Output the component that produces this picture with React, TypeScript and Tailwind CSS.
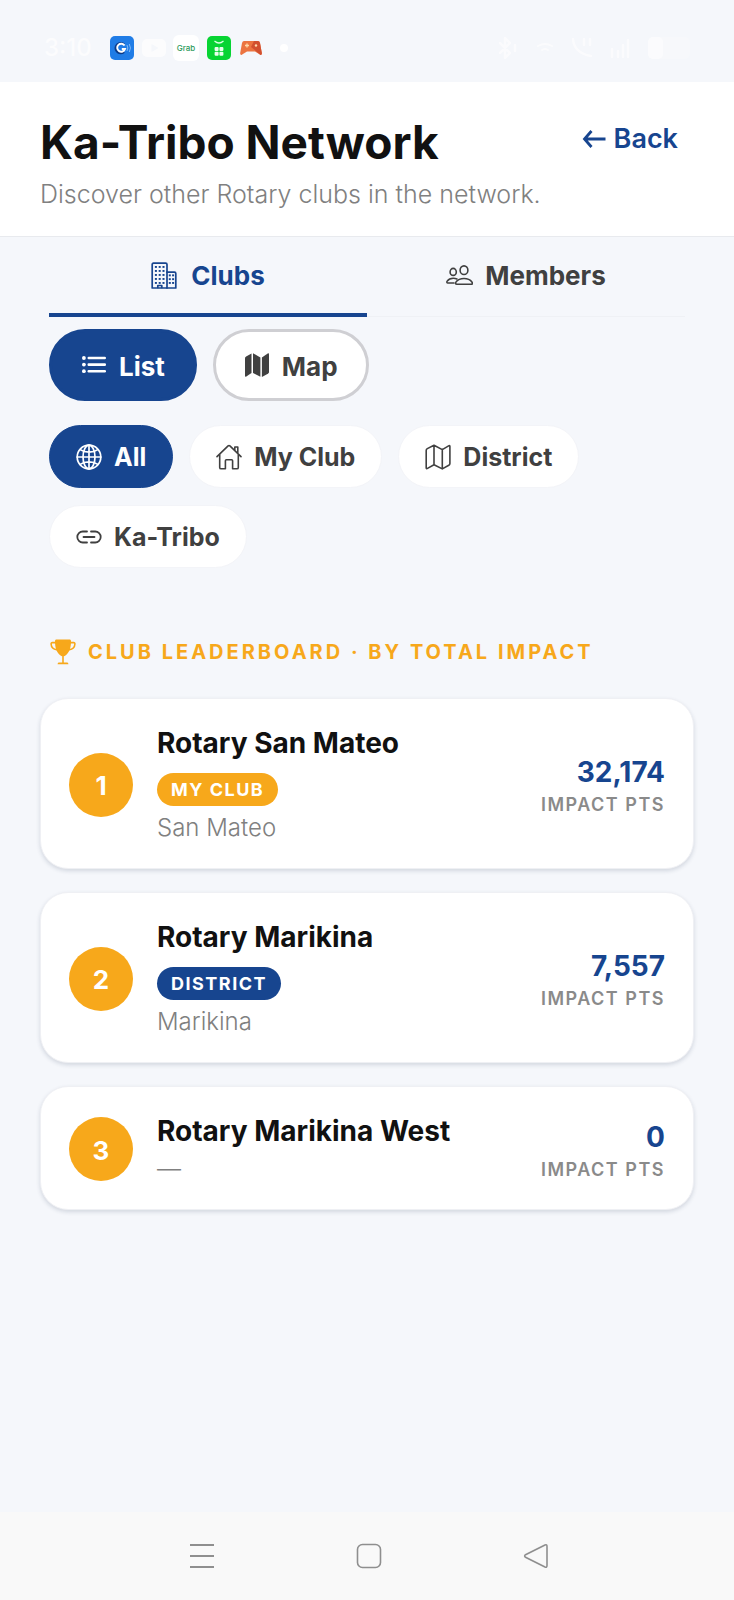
import React from 'react';

type IconProps = { className?: string };

const stroke = {
  fill: 'none',
  stroke: 'currentColor',
  strokeLinecap: 'round' as const,
  strokeLinejoin: 'round' as const,
};

function BuildingsIcon({ className = 'h-[27px] w-[26px]' }: IconProps) {
  const tall: [number, number][] = [];
  for (let row = 0; row < 5; row++) for (let col = 0; col < 3; col++) tall.push([3.9 + col * 3.8, 4 + row * 4]);
  const low: [number, number][] = [];
  for (let row = 0; row < 3; row++) for (let col = 0; col < 2; col++) low.push([17.8 + col * 3.3, 12.4 + row * 3.8]);
  return (
    <svg viewBox="0 0 26 27" className={className} aria-hidden="true">
      <g {...stroke} strokeWidth="1.7">
        <path d="M2.4 1.2h12.2q1.4 0 1.4 1.4V26H1.200V2.400q0-1.200 1.200-1.200z" />
        <path d="M16 10.200h7.400q1.400 0 1.400 1.400V26H16" />
        <path d="M6.800 25.500v-2h4v2" />
      </g>
      {[...tall, ...low].map(([x, y]) => (
        <rect key={`${x}-${y}`} x={x} y={y} width="2" height="1.900" fill="currentColor" />
      ))}
    </svg>
  );
}

function PeopleIcon() {
  return (
    <svg viewBox="0 0 27 21" className="h-[21px] w-[27px]" aria-hidden="true">
      <g {...stroke} strokeWidth="1.6">
        <ellipse cx="7.200" cy="6.900" rx="3.100" ry="3.500" />
        <ellipse cx="18" cy="5.200" rx="3.900" ry="4.300" />
        <path d="M10.900 19.200c-1.600 0-1.600-1.200-.8-2.300 1.500-2 4.300-3.400 7.900-3.400s6.400 1.400 7.900 3.400c.8 1.100.8 2.300-.8 2.300z" />
        <path d="M8 18H1.900c-1.200 0-1.300-1-.7-1.900 1.200-1.700 3.200-2.900 6-2.900 1.500 0 2.700.300 3.700.8" />
      </g>
    </svg>
  );
}

function ListIcon() {
  return (
    <svg viewBox="0 0 26 20" className="h-5 w-[26px]" aria-hidden="true" fill="currentColor">
      {[3, 9.6, 16.2].map((y) => (
        <g key={y}>
          <circle cx="2.900" cy={y} r="1.900" />
          <rect x="6.500" y={y - 1.3} width="18.500" height="2.600" rx="1.200" />
        </g>
      ))}
    </svg>
  );
}

function MapFillIcon() {
  return (
    <svg viewBox="0 0 26 26" className="size-[26px]" aria-hidden="true" fill="currentColor">
      <path d="M7.500 1.400v19.600l-5.200 3.500C1.500 25 1 24.700 1 23.800V6.400c0-1 .4-1.500 1.100-2z" />
      <path d="M9 1.300l7.400 4.200v19.200L9 20.900z" />
      <path d="M17.900 5.500l5.800-4c.8-.5 1.300-.2 1.300.7v17.600c0 1-.4 1.500-1.100 2l-6 3.200z" />
    </svg>
  );
}

function MapIcon() {
  return (
    <svg viewBox="0 0 26 26" className="size-[26px]" aria-hidden="true">
      <path
        {...stroke}
        strokeWidth="1.600"
        d="M1.200 6.400c0-1 .4-1.400 1.100-1.800L9 1.300l8.300 4.300 6.300-3.700c.9-.5 1.300-.2 1.300.7v16.800c0 1-.4 1.400-1.100 1.800l-6.500 3.700L9 20.700l-6.500 3.700c-.8.5-1.300.2-1.300-.7zM9 1.300v19.400M17.300 5.600v19.300"
      />
    </svg>
  );
}

function GlobeIcon() {
  return (
    <svg viewBox="0 0 26 26" className="size-[26px]" aria-hidden="true">
      <g {...stroke} strokeWidth="1.700">
        <circle cx="13" cy="13" r="11.800" />
        <ellipse cx="13" cy="13" rx="6" ry="11.800" />
        <path d="M13 1.200v23.600M1.200 13h23.600M4.200 5.600c2.200 1.600 5.300 2.500 8.800 2.500s6.600-.9 8.800-2.500M4.200 20.400c2.200-1.600 5.300-2.500 8.800-2.500s6.600.9 8.800 2.500" />
      </g>
    </svg>
  );
}

function HouseIcon() {
  return (
    <svg viewBox="0 0 26 26" className="size-[26px]" aria-hidden="true">
      <path
        {...stroke}
        strokeWidth="1.600"
        d="M1 12.600L12.100 1.900q.9-.8 1.800 0L25 12.600M18.800 6.300V3h3v6.300M3.700 10.400v13q0 1.400 1.400 1.400h4.300v-8q0-1 1-1h5.200q1 0 1 1v8h4.300q1.400 0 1.400-1.400v-13"
      />
    </svg>
  );
}

function LinkIcon() {
  return (
    <svg viewBox="0 0 26 26" className="size-[26px]" aria-hidden="true">
      <path
        {...stroke}
        strokeWidth="1.800"
        d="M11 18.500H6.800a5.500 5.500 0 0 1 0-11H11M15 7.500h4.200a5.500 5.500 0 0 1 0 11H15M7.500 13h11"
      />
    </svg>
  );
}

function TrophyIcon() {
  return (
    <svg viewBox="0 0 26 26" className="size-[26px]" aria-hidden="true">
      <path
        fill="currentColor"
        d="M6.600.6h12.800c1.100 0 1.600.6 1.600 1.500 0 6.200-1.300 11.200-5.200 14.100-.8.6-1.600.9-2 1v6.400h3c1 0 1.600.6 1.600 1.600H7.600c0-1 .6-1.600 1.600-1.600h3v-6.400c-.4-.1-1.200-.4-2-1C6.300 13.300 5 8.300 5 2.100 5 1.200 5.500.6 6.600.6z"
      />
      <path
        {...stroke}
        strokeWidth="1.600"
        d="M5.700 3.600H2.300Q1 3.600 1.100 5c.2 3.200 2.400 5.400 5.700 5.800M20.300 3.600h3.400q1.300 0 1.200 1.400c-.2 3.200-2.400 5.400-5.700 5.800"
      />
    </svg>
  );
}

function ArrowLeftIcon() {
  return (
    <svg viewBox="0 0 24 24" className="size-6" aria-hidden="true">
      <path
        fill="none"
        stroke="currentColor"
        strokeWidth="2.800"
        strokeLinejoin="miter"
        d="M23.500 12H2.500M9.500 4L2.500 12l7 8"
      />
    </svg>
  );
}

function StatusBar() {
  return (
    <div className="flex h-[82px] items-center justify-between bg-[#f5f7fb] pt-3.5 pr-11 pl-11 text-white">
      <div className="flex items-center gap-[7px]">
        <span className="w-[58px] text-2xl font-medium opacity-70">3:10</span>
        <svg viewBox="0 0 26 26" className="size-[26px]" aria-hidden="true">
          <rect x="1" y="1" width="24" height="24" rx="5" fill="#1f7ce6" />
          <path d="M15.200 9.600a5 5 0 1 0-.2 7.300" fill="none" stroke="#0b3a86" strokeWidth="2.400" />
          <path d="M15.600 10.600a4 4 0 1 0 .4 3.400h-3.200" fill="none" stroke="#fff" strokeWidth="1.900" />
          <path d="M18 10q1.600 3 0 6M20.300 9q2.300 4 0 8" fill="none" stroke="#7fb9f7" strokeWidth="1" />
        </svg>
        <svg viewBox="0 0 24 18" className="h-[18px] w-6 opacity-70" aria-hidden="true">
          <rect width="24" height="18" rx="5" fill="#fff" />
          <path d="M9.500 5v8l7-4z" fill="#f5f7fb" />
        </svg>
        <span className="flex size-[26px] items-center justify-center rounded-md bg-white text-[8px] font-medium text-[#2b9a5b]">
          Grab
        </span>
        <svg viewBox="0 0 26 26" className="size-[26px]" aria-hidden="true">
          <rect x="1" y="1" width="24" height="24" rx="5" fill="#07d433" />
          <path d="M8.500 6q4.500 4 9 0" fill="none" stroke="#d9ffe0" strokeWidth="1.200" />
          <g fill="#e9ffed">
            <rect x="8.600" y="12" width="4" height="4" rx="1" />
            <rect x="13.400" y="12" width="4" height="4" rx="1" />
            <rect x="8.600" y="16.800" width="4" height="4" rx="1" />
            <rect x="13.400" y="16.800" width="4" height="4" rx="1" />
          </g>
        </svg>
        <svg viewBox="0 0 24 18" className="h-[18px] w-6" aria-hidden="true">
          <path
            d="M5 2h14q1.500 0 2 2l1.800 10q.2 2-1.200 1.900L16 12.500H8L2.400 15.900Q1 16 1.200 14L3 4q.5-2 2-2z"
            fill="#ec7440"
          />
          <path d="M15 2h4q1.500 0 2 2l1.800 10q.2 2-1.200 1.900L12 8z" fill="#d2502f" />
          <path d="M6 6.500h4M8 4.500v4" stroke="#ffd9a8" strokeWidth="1.300" />
          <circle cx="17" cy="6.500" r="1.200" fill="#ffd9a8" />
        </svg>
        <span className="ml-2.5 size-2 rounded-full bg-white" />
      </div>
      <div className="flex items-center gap-4 opacity-60">
        <svg viewBox="0 0 24 24" className="size-6" aria-hidden="true">
          <path {...stroke} strokeWidth="2.500" d="M4 7l10 10-5 5V2l5 5L4 17M19 9v6" />
        </svg>
        <svg viewBox="0 0 18 12" className="h-3 w-[18px]" aria-hidden="true">
          <path {...stroke} strokeWidth="2" d="M2 4q7-4 14 0M6 8q3-2 6 0" />
        </svg>
        <svg viewBox="0 0 24 24" className="size-6" aria-hidden="true">
          <path {...stroke} strokeWidth="2.500" d="M3 3q1 14 18 17M14 3v6M20 3v6" />
        </svg>
        <svg viewBox="0 0 22 22" className="size-[22px]" aria-hidden="true">
          <path {...stroke} strokeWidth="2.500" d="M2 20v-8M8 20v-6M13 20V8M18 20V3" />
        </svg>
        <svg viewBox="0 0 42 22" className="h-[22px] w-[42px]" aria-hidden="true">
          <rect width="42" height="22" rx="5" fill="#f9fafc" />
          <rect width="15" height="22" rx="5" fill="#fff" />
        </svg>
      </div>
    </div>
  );
}

type ChipProps = { icon: React.ReactNode; label: string; active?: boolean };

function FilterChip({ icon, label, active }: ChipProps) {
  return (
    <button
      type="button"
      aria-pressed={!!active}
      className={
        active
          ? 'flex h-[63px] items-center gap-3 rounded-full border border-[#17458f] bg-[#17458f] px-[26px] text-[25px] font-bold text-white'
          : 'flex h-[63px] items-center gap-3 rounded-full border border-[#f3f4f8] bg-white px-[26px] text-[25px] font-bold text-[#404040]'
      }
    >
      {icon}
      <span className="pt-0.5">{label}</span>
    </button>
  );
}

type Club = { rank: number; name: string; place: string; points: string; tag?: 'My Club' | 'District' };

const clubs: Club[] = [
  { rank: 1, name: 'Rotary San Mateo', place: 'San Mateo', points: '32,174', tag: 'My Club' },
  { rank: 2, name: 'Rotary Marikina', place: 'Marikina', points: '7,557', tag: 'District' },
  { rank: 3, name: 'Rotary Marikina West', place: '—', points: '0' },
];

function ClubCard({ club }: { club: Club }) {
  return (
    <li className="flex items-center gap-6 rounded-[28px] border border-[#eff0f4] bg-white px-7 pt-6 pb-[22px] shadow-[0_2px_4px_rgba(30,50,80,0.16)]">
      <span className="flex size-16 shrink-0 items-center justify-center rounded-full bg-[#f7a81b] pt-0.5 text-[26px] font-bold text-white">
        {club.rank}
      </span>
      <div className="flex min-w-0 flex-1 flex-col items-start">
        <h3 className="text-[28px] leading-10 font-bold text-[#111111]">{club.name}</h3>
        {club.tag && (
          <span
            className={
              club.tag === 'My Club'
                ? 'mt-2.5 mb-1 flex h-[33px] items-center rounded-full bg-[#f7a81b] px-3.5 text-lg font-bold tracking-[1.5px] text-white uppercase'
                : 'mt-2.5 mb-1 flex h-[33px] items-center rounded-full bg-[#17458f] px-3.5 text-lg font-bold tracking-[1.5px] text-white uppercase'
            }
          >
            {club.tag}
          </span>
        )}
        <p className="text-2xl leading-9 font-light text-[#808080]">{club.place}</p>
      </div>
      <div className="flex flex-col items-end pt-1">
        <span className="text-[28px] leading-9 font-bold text-[#17458f]">{club.points}</span>
        <span className="text-lg leading-[29px] font-semibold tracking-[1.5px] text-[#8a8a8a] uppercase">Impact pts</span>
      </div>
    </li>
  );
}

export default function App() {
  return (
    <div className="flex min-h-screen flex-col bg-[#f5f7fb] font-['Inter','Liberation_Sans',sans-serif]">
      <StatusBar />
      <header className="flex items-start justify-between border-b border-[#e8eaee] bg-white pt-7 pr-14 pb-6 pl-10">
        <div>
          <h1 className="pt-0.5 text-[46px] leading-[60px] font-bold text-[#111111]">Ka-Tribo Network</h1>
          <p className="mt-1 text-[25px] leading-9 font-light text-[#808080]">
            Discover other Rotary clubs in the network.
          </p>
        </div>
        <a href="#back" className="mt-[9px] flex items-center gap-2 text-[27px] leading-10 font-semibold text-[#17458f]">
          <ArrowLeftIcon />
          Back
        </a>
      </header>

      <main className="flex-1 px-10">
        <div className="px-[9px]">
          <nav className="grid grid-cols-2">
            <a
              href="#clubs"
              aria-current="page"
              className="flex h-20 items-center justify-center gap-3.5 border-b-4 border-[#17458f] text-[26px] font-bold text-[#17458f]"
            >
              <BuildingsIcon />
              Clubs
            </a>
            <a
              href="#members"
              className="flex h-20 items-center justify-center gap-3 border-b border-[#eff1f5] pb-0.5 text-[26px] font-bold text-[#404040]"
            >
              <PeopleIcon />
              Members
            </a>
          </nav>

          <div className="mt-3 flex gap-4">
            <button
              type="button"
              aria-pressed="true"
              className="flex h-[72px] items-center gap-3 rounded-full border-3 border-[#17458f] bg-[#17458f] px-[29px] text-[26px] font-bold text-white"
            >
              <ListIcon />
              <span className="pt-0.5">List</span>
            </button>
            <button
              type="button"
              aria-pressed="false"
              className="flex h-[72px] items-center gap-3 rounded-full border-3 border-[#cfcfd3] bg-white px-7 text-[26px] font-bold text-[#404040]"
            >
              <MapFillIcon />
              <span className="pt-0.5">Map</span>
            </button>
          </div>

          <div className="mt-6 flex flex-wrap gap-x-4 gap-y-[17px]">
            <FilterChip icon={<GlobeIcon />} label="All" active />
            <FilterChip icon={<HouseIcon />} label="My Club" />
            <FilterChip icon={<MapIcon />} label="District" />
            <FilterChip icon={<LinkIcon />} label="Ka-Tribo" />
          </div>
        </div>

        <h2 className="mt-[68px] flex items-center gap-3 px-2.5 text-xl leading-8 font-bold tracking-[3px] text-[#f7a81b] uppercase">
          <TrophyIcon />
          Club leaderboard · by total impact
        </h2>
        <ol className="mt-[30px] flex flex-col gap-[23px]">
          {clubs.map((club) => (
            <ClubCard key={club.rank} club={club} />
          ))}
        </ol>
      </main>

      <nav className="flex h-[88px] items-center justify-center gap-[141px] bg-[#f9f9f9] pl-1 text-[#8f8f8f]">
        <button type="button" aria-label="Recent apps">
          <svg viewBox="0 0 26 26" className="size-[26px]" aria-hidden="true">
            <path d="M1 2h24M1 13h24M1 24h24" stroke="currentColor" strokeWidth="1.800" />
          </svg>
        </button>
        <button type="button" aria-label="Home">
          <svg viewBox="0 0 26 26" className="size-[26px]" aria-hidden="true">
            <rect x="1.500" y="1.500" width="23" height="23" rx="5" fill="none" stroke="currentColor" strokeWidth="1.600" />
          </svg>
        </button>
        <button type="button" aria-label="Go back">
          <svg viewBox="0 0 26 26" className="size-[26px]" aria-hidden="true">
            <path {...stroke} strokeWidth="1.600" d="M22 2L2.500 11.700q-1.700 1.300 0 2.600L22 24q2 .8 2-1.500v-19Q24 1.200 22 2z" />
          </svg>
        </button>
      </nav>
    </div>
  );
}
